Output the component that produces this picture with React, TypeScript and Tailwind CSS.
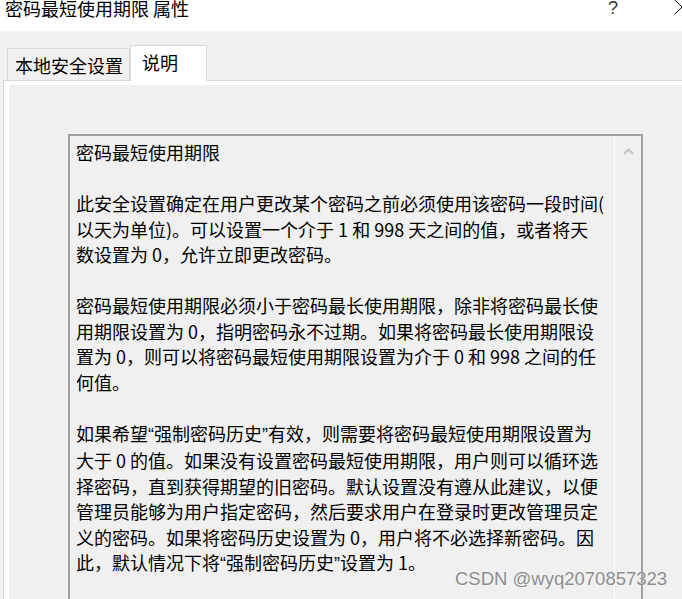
import React from "react";

const lines = [
  "密码最短使用期限",
  "",
  "此安全设置确定在用户更改某个密码之前必须使用该密码一段时间(",
  "以天为单位)。可以设置一个介于 1 和 998 天之间的值，或者将天",
  "数设置为 0，允许立即更改密码。",
  "",
  "密码最短使用期限必须小于密码最长使用期限，除非将密码最长使",
  "用期限设置为 0，指明密码永不过期。如果将密码最长使用期限设",
  "置为 0，则可以将密码最短使用期限设置为介于 0 和 998 之间的任",
  "何值。",
  "",
  "如果希望“强制密码历史”有效，则需要将密码最短使用期限设置为",
  "大于 0 的值。如果没有设置密码最短使用期限，用户则可以循环选",
  "择密码，直到获得期望的旧密码。默认设置没有遵从此建议，以便",
  "管理员能够为用户指定密码，然后要求用户在登录时更改管理员定",
  "义的密码。如果将密码历史设置为 0，用户将不必选择新密码。因",
  "此，默认情况下将“强制密码历史”设置为 1。",
];

// curly quotes are narrow in the original font
function Line({ text }: { text: string }) {
  if (text === "") return <div>{"\u00a0"}</div>;
  const parts = text.split(/([“”])/);
  return (
    <div className="whitespace-pre">
      {parts.map((p, i) =>
        p === "“" || p === "”" ? (
          <span key={i} className="font-['Liberation_Sans',sans-serif]">
            {p}
          </span>
        ) : (
          <React.Fragment key={i}>{p}</React.Fragment>
        )
      )}
    </div>
  );
}

export default function App() {
  return (
    <div className="relative w-[682px] h-[599px] overflow-hidden bg-[#f0f0f0] font-['Noto_Sans_CJK_SC','Microsoft_YaHei',sans-serif] text-black">
      {/* title bar */}
      <div className="flex h-[31px] bg-white">
        <span className="ml-[5px] mt-[-2px] text-[18px] leading-[20px] whitespace-nowrap">
          密码最短使用期限 属性
        </span>
        <span className="ml-auto mt-[-2px] w-[10px] text-center text-[18px] leading-[20px] text-[#333] font-['Liberation_Sans',sans-serif] font-light">
          ?
        </span>
        <span className="ml-[56px] mr-[-8px] mt-[-1px] shrink-0">
          <svg width="16" height="16" viewBox="0 0 16 16">
            <path d="M0.5 0.5 L15.5 15.5 M0.5 15.5 L15.5 0.5" stroke="#111" strokeWidth="1" fill="none" />
          </svg>
        </span>
      </div>

      {/* tabs */}
      <div className="flex items-end h-[49px] pl-[7px]">
        <div className="h-[32px] w-[123px] border border-b-0 border-[#d9d9d9] pl-[7px] pt-[4px] text-[18px] leading-[24px] whitespace-nowrap">
          本地安全设置
        </div>
        <div className="relative z-10 -mb-px h-[36px] w-[77px] border border-b-0 border-[#d9d9d9] bg-white pl-[11px] pt-[4px] text-[18px] leading-[24px] whitespace-nowrap">
          说明
        </div>
      </div>

      {/* tab panel */}
      <div className="ml-[3px] border-l border-t border-[#d9d9d9] bg-white pl-[5px] pt-[4px] h-[520px]">
        <div className="h-full bg-[#f0f0f0] pl-[59px] pt-[49px]">
          <div className="flex w-[575px] h-[480px] border-2 border-[#a0a0a0] bg-[#f0f0f0]">
            <div className="flex-1 pl-[6px] pt-[4px] text-[18px] leading-[25.5px]">
              {lines.map((l, i) => (
                <Line key={i} text={l} />
              ))}
            </div>
            <div className="w-[27px] border-l border-white flex justify-center pt-[12px]">
              <svg width="11" height="7" viewBox="0 0 11 7">
                <path d="M1 6 L5.5 1.5 L10 6" stroke="#c4c4c4" strokeWidth="2" fill="none" />
              </svg>
            </div>
          </div>
        </div>
      </div>

      {/* watermark */}
      <div className="absolute left-[455px] top-[567px] text-[18.5px] leading-[24px] whitespace-nowrap font-['Liberation_Sans',sans-serif] text-[#8d8d8d] [text-shadow:0_0_1px_#ffffff]">
        CSDN @wyq2070857323
      </div>
    </div>
  );
}
